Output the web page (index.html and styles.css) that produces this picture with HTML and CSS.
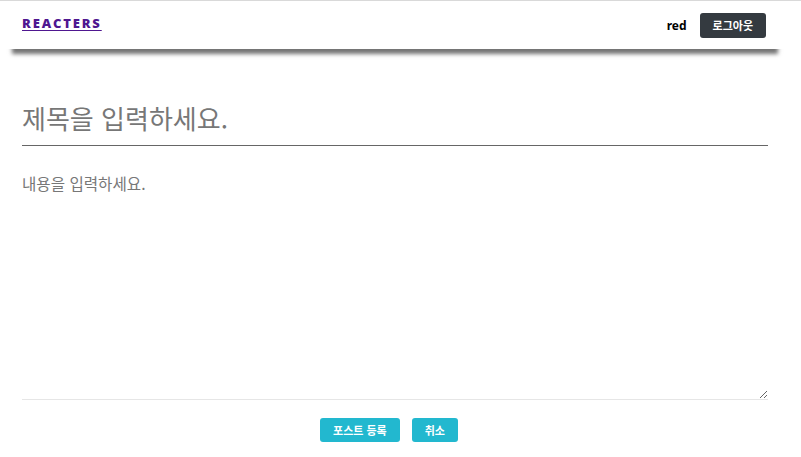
FILE: index.html
```html
<!DOCTYPE html>
<html lang="ko">
<head>
<meta charset="utf-8">
<title>REACTERS</title>
<link rel="stylesheet" href="styles.css">
</head>
<body>
<div class="page">
  <header class="header">
    <div class="header-inner">
      <a class="logo" href="#">REACTERS</a>
      <div class="right">
        <span class="user">red</span>
        <button class="btn btn-dark">로그아웃</button>
      </div>
    </div>
  </header>
  <main class="editor">
    <input class="title-input" placeholder="제목을 입력하세요.">
    <textarea class="body-input" placeholder="내용을 입력하세요."></textarea>
    <div class="actions">
      <button class="btn btn-cyan">포스트 등록</button>
      <button class="btn btn-cyan">취소</button>
    </div>
  </main>
</div>
</body>
</html>
```
FILE: styles.css
```css
html, body {
  margin: 0;
  padding: 0;
  background: #fff;
}
body {
  border-top: 1px solid #d9d9d9;
  font-family: "Noto Sans", "Noto Sans CJK KR", sans-serif;
}
.header {
  padding: 0 11px 0 0;
}
.header-inner {
  height: 48px;
  display: flex;
  align-items: center;
  justify-content: space-between;
  padding: 0 24px 0 22px;
  box-shadow: 0 17px 4px -12px rgba(0, 0, 0, 0.55);
  background: #fff;
  position: relative;
}
.logo {
  font-family: "Open Sans", sans-serif;
  font-weight: 800;
  font-size: 13px;
  letter-spacing: 1.85px;
  color: #4f1790;
  text-decoration: underline;
  text-underline-offset: 2px;
  margin-top: -4px;
}
.right {
  display: flex;
  align-items: center;
  gap: 13px;
}
.user {
  font-family: "Noto Sans", sans-serif;
  font-weight: bold;
  font-size: 12px;
  color: #000;
}
.btn {
  border: none;
  font-family: "Noto Sans CJK KR", sans-serif;
  font-weight: bold;
  font-size: 11px;
  color: #fff;
  height: 24px;
  padding: 0 12px;
  border-radius: 3px;
  cursor: pointer;
}
.btn-dark {
  background: #343a40;
  padding: 0 13px;
  height: 25px;
}
.btn-cyan {
  background: #22b8cf;
}
.editor {
  padding: 48px 33px 0 22px;
  display: flex;
  flex-direction: column;
}
.title-input {
  border: none;
  border-bottom: 1px solid #666;
  outline: none;
  font-family: "Noto Sans CJK KR", sans-serif;
  font-size: 26px;
  padding: 0 0 8px 0;
  height: 49px;
  box-sizing: border-box;
  color: #333;
}
.title-input::placeholder {
  color: #777;
}
.body-input {
  margin-top: 20px;
  border: none;
  border-bottom: 1px solid #e6e6e6;
  outline: none;
  font-family: "Noto Sans CJK KR", sans-serif;
  font-size: 15.6px;
  padding: 6px 0 0 0;
  height: 234px;
  box-sizing: border-box;
}
.body-input::placeholder {
  color: #777;
}
.actions {
  display: flex;
  justify-content: center;
  padding-top: 18px;
}
.actions .btn {
  margin-right: 12px;
  padding: 0 13px;
}
```
